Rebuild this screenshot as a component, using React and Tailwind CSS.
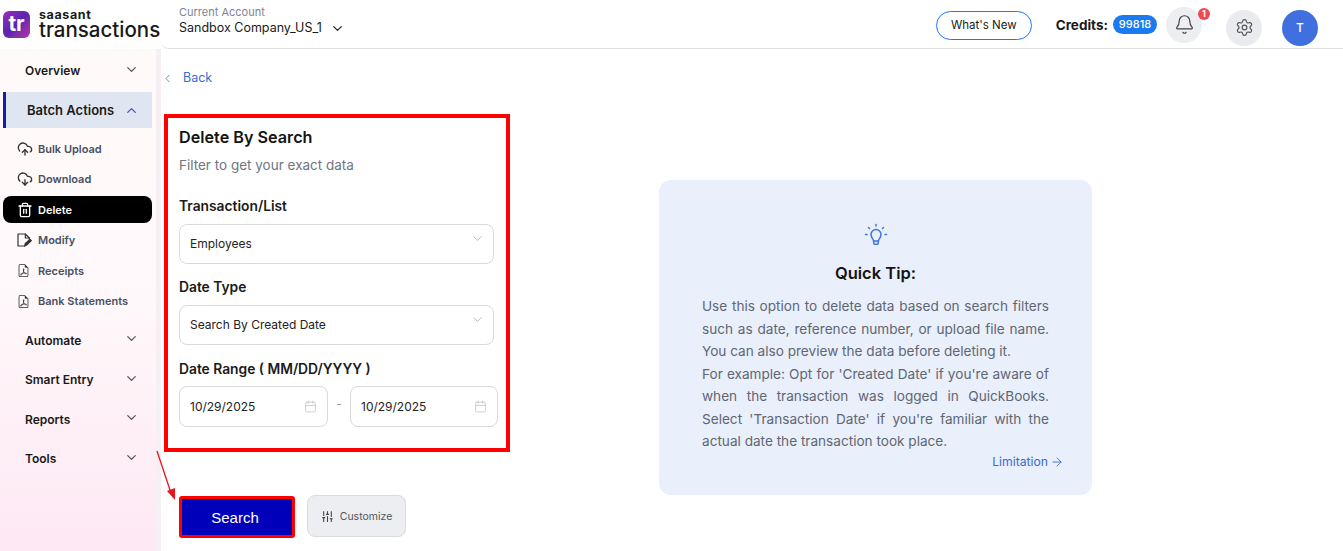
import React from 'react'
import {
  ArrowRight, Bell, Calendar, ChevronDown, ChevronLeft, ChevronUp, CloudDownload, CloudUpload,
  Settings, SlidersVertical, Trash2,
} from 'lucide-react'
import { BsFileEarmarkPdf } from 'react-icons/bs'

function ModifyIcon({ className }) {
  return (
    <svg className={className} viewBox="0 0 24 24" fill="none" stroke="currentColor" strokeWidth="1.800" strokeLinecap="round" strokeLinejoin="round">
      <path d="M13 21H3V3h11l6 6v3" />
      <path d="M14 3v6h6" />
      <path d="M13 21l1-4 7-6 2 2-7 6.500z" fill="currentColor" />
    </svg>
  )
}

function NavGroup({ label, className = '' }) {
  return (
    <div className={`flex items-center justify-between pl-[25px] pr-[17px] ${className}`}>
      <span className="text-[12px] font-semibold leading-[18px] text-[#1a1a1a]">{label}</span>
      <ChevronDown className="w-[15px] h-[15px] text-[#555] -translate-y-[2px]" />
    </div>
  )
}

function SubItem({ icon: Icon, label, className = '', active = false, iconClass = 'w-4 h-4' }) {
  return (
    <div
      className={`flex items-center h-[27px] ${
        active ? 'bg-black text-white rounded-lg' : 'text-[#475063]'
      } ${className}`}
    >
      <span className={`w-[35px] pl-[14px] flex ${active ? 'text-white' : 'text-[#333]'}`}>
        <Icon className={iconClass} />
      </span>
      <span className="text-[11px] font-semibold leading-4">{label}</span>
    </div>
  )
}

function Sidebar() {
  return (
    <aside className="w-[161px] shrink-0 h-full pt-[13px] bg-gradient-to-b from-[#fffafa] via-[#fff8fa] to-[#fde8f3] border-r-[5px] border-[#f6f0f4]">
      <NavGroup label="Overview" className="h-[18px]" />
      <div className="w-[149px] ml-[3px] mt-[12px] h-[36px] pl-[21px] pr-[13px] pt-px flex items-center justify-between bg-[#dfe6f1] border-l-[3px] border-[#1a1aa6]">
        <span className="text-[13px] font-semibold text-[#1a1a1a]">Batch Actions</span>
        <ChevronUp className="w-[15px] h-[15px] text-[#4a4ac8]" />
      </div>
      <div className="w-[149px] ml-[3px] mt-[7px] flex flex-col gap-[3.5px]">
        <SubItem icon={CloudUpload} label="Bulk Upload" />
        <SubItem icon={CloudDownload} label="Download" />
        <SubItem icon={Trash2} label="Delete" active />
        <SubItem icon={ModifyIcon} label="Modify" iconClass="w-4 h-4 -ml-px" />
        <SubItem icon={BsFileEarmarkPdf} label="Receipts" iconClass="w-[13px] h-[13px]" />
        <SubItem icon={BsFileEarmarkPdf} label="Bank Statements" iconClass="w-[13px] h-[13px]" />
      </div>
      <div className="mt-[17px] flex flex-col gap-[21.6px]">
        <NavGroup label="Automate" />
        <NavGroup label="Smart Entry" />
        <NavGroup label="Reports" />
        <NavGroup label="Tools" />
      </div>
    </aside>
  )
}

function Header() {
  return (
    <header className="h-[49px] shrink-0 flex items-stretch">
      <div className="w-[161px] shrink-0 flex items-center pl-[3px]">
        <div className="w-[27px] h-[27px] rounded-md bg-gradient-to-br from-[#a02bb8] via-[#5a22b0] to-[#c02aa0] flex items-center justify-center text-white text-[21px] font-bold leading-none pb-[3px]">
          tr
        </div>
        <div className="ml-[9px] -mt-px flex flex-col">
          <span className="text-[12.5px] font-bold leading-[11px] text-[#1a1a1a] tracking-[0.6px]">saasant</span>
          <span className="text-[20.5px] font-medium leading-[20px] text-[#1a1a1a]">transactions</span>
        </div>
      </div>
      <div className="flex-1 flex items-center justify-between border-b border-[#e0e0e0] rounded-bl-lg pl-[18px] pr-[25px]">
        <div className="-mt-[8px]">
          <div className="text-[11px] leading-4 text-[#7b8494]">Current Account</div>
          <div className="flex items-center text-[12.5px] leading-4 text-[#1a1a1a]">
            Sandbox Company_US_1
            <ChevronDown className="w-[15px] h-[15px] ml-[8px] text-[#222]" />
          </div>
        </div>
        <div className="flex items-center">
          <div className="w-[96px] h-[29px] mr-[24px] mt-[2px] pt-[2px] rounded-full border border-[#1a7bf0] flex items-center justify-center text-[11.5px] text-[#1a1a1a]">
            What's New
          </div>
          <span className="text-[13.5px] font-bold text-[#1a1a1a] mr-[5px] mt-[2px]">Credits:</span>
          <span className="h-[19px] w-[44px] rounded-full bg-[#1a7bf0] text-white text-[11px] font-medium flex items-center justify-center mr-[9px] mt-[1px]">
            99818
          </span>
          <div className="relative w-[36px] h-[36px] rounded-full bg-[#eceef1] flex items-center justify-center mr-[24px] mt-[1px]">
            <Bell className="w-[21px] h-[21px] text-[#444]" strokeWidth={1.4} />
            <span className="absolute top-[1px] right-[-8px] w-[12px] h-[12px] rounded-full bg-[#f04a50] text-white text-[9px] font-bold flex items-center justify-center">
              1
            </span>
          </div>
          <div className="w-[36px] h-[36px] rounded-full bg-[#e9ebef] flex items-center justify-center mr-[20px] mt-[7px]">
            <Settings className="w-[19px] h-[19px] text-[#555]" strokeWidth={1.5} />
          </div>
          <div className="w-[36px] h-[36px] rounded-full bg-[#4070e0] flex items-center justify-center text-white text-[12px] font-medium mt-[7px]">
            T
          </div>
        </div>
      </div>
    </header>
  )
}

function SelectBox({ value }) {
  return (
    <div className="w-[315px] h-[40px] rounded-lg border border-[#d9d9d9] bg-white relative flex items-center pl-[10px] text-[12px] text-[#222]">
      {value}
      <ChevronDown className="absolute right-[8px] top-[6px] w-[15px] h-[15px] text-[#bbb]" strokeWidth={1.5} />
    </div>
  )
}

function DateBox({ className = '' }) {
  return (
    <div className={`h-[41px] rounded-lg border border-[#d9d9d9] flex items-center justify-between pl-[10px] pr-[10px] text-[12px] text-[#222] ${className}`}>
      10/29/2025
      <Calendar className="w-[13px] h-[13px] text-[#c4c4c4]" strokeWidth={1.5} />
    </div>
  )
}

function FilterForm() {
  return (
    <div className="w-[346px] h-[338px] border-[4px] border-[#ff0000] pl-[11px] pt-[6px]">
      <h2 className="text-[16.200px] font-semibold leading-[26px] text-[#141414]">Delete By Search</h2>
      <p className="mt-[5px] text-[13.500px] leading-[20px] text-[#70757f]">Filter to get your exact data</p>
      <div className="mt-[21px] text-[13.800px] font-semibold leading-[20px] text-[#1a1a1a]">Transaction/List</div>
      <div className="mt-[8px]"><SelectBox value="Employees" /></div>
      <div className="mt-[13px] text-[13.800px] font-semibold leading-[20px] text-[#1a1a1a]">Date Type</div>
      <div className="mt-[8px]"><SelectBox value="Search By Created Date" /></div>
      <div className="mt-[14px] text-[13.800px] font-semibold leading-[20px] text-[#1a1a1a]">Date Range ( MM/DD/YYYY )</div>
      <div className="mt-[7px] flex items-center">
        <DateBox className="w-[149px]" />
        <span className="w-[22px] text-center text-[12px] text-[#999] -mt-[5px]">-</span>
        <DateBox className="w-[148px]" />
      </div>
    </div>
  )
}

function QuickTip() {
  return (
    <div className="w-[433px] h-[315px] rounded-xl bg-[#e9effb] pt-[43px] px-[43px]">
      <svg className="mx-auto w-[24px] h-[24px] text-[#3f74e0]" viewBox="0 0 24 24" fill="none" stroke="currentColor" strokeWidth="1.5" strokeLinecap="round">
        <path d="M9.5 18c0-2-2.500-3-2.500-6.500a5 5 0 0 1 10 0C17 15 14.500 16 14.500 18z" />
        <path d="M9.800 18v2.200a1 1 0 0 0 1 1h2.400a1 1 0 0 0 1-1V18" />
        <path d="M12 1.500v1.500M4.500 4.500l1 1M19.500 4.500l-1 1M1.500 11.500H3M21 11.500h1.500" />
      </svg>
      <h3 className="mt-[13px] text-center text-[16.500px] font-semibold leading-[26px] text-[#141414]">Quick Tip:</h3>
      <p className="mt-[9px] text-[13.600px] leading-[22.500px] text-[#5f6772] text-justify">
        Use this option to delete data based on search filters such as date, reference number, or upload file name. You can also preview the data before deleting it.
        <br />
        For example: Opt for 'Created Date' if you're aware of when the transaction was logged in QuickBooks. Select 'Transaction Date' if you're familiar with the actual date the transaction took place.
      </p>
      <div className="-mt-[1px] -mr-[15px] flex items-center justify-end text-[12.200px] leading-5 text-[#3a6bd0]">
        Limitation
        <ArrowRight className="w-[14px] h-[14px] ml-[2px]" strokeWidth={1.5} />
      </div>
    </div>
  )
}

export default function App() {
  return (
    <div className="w-[1343px] h-[551px] overflow-hidden bg-white relative flex flex-col font-['Inter','Noto_Sans',sans-serif]">
      <Header />
      <div className="flex flex-1 min-h-0">
        <Sidebar />
        <main className="flex-1 min-w-0">
          <div className="flex items-center h-[20px] mt-[19px] text-[12.500px] text-[#3a6bd0]">
            <ChevronLeft className="w-[13px] h-[13px]" strokeWidth={1.5} />
            <span className="ml-[9px]">Back</span>
          </div>
          <div className="flex pl-[3px] mt-[26px]">
            <div>
              <FilterForm />
              <div className="flex items-start mt-[44px] ml-[15px]">
                <button className="w-[116px] h-[42px] pt-[3px] pr-[4px] border-[3px] border-[#ff0000] rounded-[3px] bg-[#0000bb] text-white text-[15px] font-['Liberation_Sans',sans-serif]">
                  Search
                </button>
                <button className="ml-[12px] -mt-[1px] pt-px w-[99px] h-[42px] rounded-lg border border-[#d9dbe0] bg-[#eceef2] flex items-center justify-center text-[10.500px] text-[#555]">
                  <SlidersVertical className="w-[13px] h-[13px] mr-[6px] text-[#444]" />
                  Customize
                </button>
              </div>
            </div>
            <div className="ml-[149px] mt-[66px]">
              <QuickTip />
            </div>
          </div>
        </main>
      </div>
      {/* annotation arrow pointing at the search button */}
      <svg className="absolute left-[150px] top-[445px] w-[30px] h-[60px]" viewBox="0 0 30 60" fill="none">
        <path d="M7 6 L21 48" stroke="#e8141c" strokeWidth="1.300" />
        <path d="M17 46 L25 43 L25 55 Z" fill="#e8141c" />
      </svg>
    </div>
  )
}
